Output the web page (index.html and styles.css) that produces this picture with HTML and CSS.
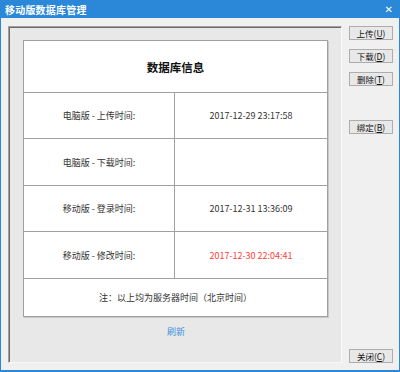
FILE: index.html
```html
<!DOCTYPE html>
<html lang="zh-CN">
<head>
    <meta charset="UTF-8">
    <title>移动版数据库管理</title>
    <link rel="stylesheet" href="styles.css">
</head>
<body>
    <div class="window">
        <div class="title-bar">
            <span class="title">移动版数据库管理</span>
            <span class="close-x">✕</span>
        </div>
        <div class="content">
            <div class="panel">
                <table class="info-table">
                    <tr class="head-row">
                        <td colspan="2">数据库信息</td>
                    </tr>
                    <tr class="row-a">
                        <td class="label">电脑版 - 上传时间:</td>
                        <td class="value">2017-12-29 23:17:58</td>
                    </tr>
                    <tr class="row-b">
                        <td class="label">电脑版 - 下载时间:</td>
                        <td class="value"></td>
                    </tr>
                    <tr class="row-a">
                        <td class="label">移动版 - 登录时间:</td>
                        <td class="value">2017-12-31 13:36:09</td>
                    </tr>
                    <tr class="row-b">
                        <td class="label">移动版 - 修改时间:</td>
                        <td class="value red">2017-12-30 22:04:41</td>
                    </tr>
                    <tr class="foot-row">
                        <td colspan="2">注：以上均为服务器时间（北京时间）</td>
                    </tr>
                </table>
                <div class="refresh">刷新</div>
            </div>
            <div class="side">
                <button class="btn">上传(<u>U</u>)</button>
                <button class="btn">下载(<u>D</u>)</button>
                <button class="btn">删除(<u>T</u>)</button>
                <button class="btn btn-bind">绑定(<u>B</u>)</button>
                <button class="btn btn-close">关闭(<u>C</u>)</button>
            </div>
        </div>
    </div>
</body>
</html>
```

FILE: styles.css
```css
body {
    margin: 0;
    font-family: "Noto Sans CJK SC", "Microsoft YaHei", sans-serif;
    background: #f0f0f0;
}
.window {
    width: 400px;
    height: 372px;
    box-sizing: border-box;
    border: 1px solid #2b88d8;
    border-top: none;
    border-bottom-width: 2px;
    background: #f0f0f0;
    display: flex;
    flex-direction: column;
}
.title-bar {
    height: 18px;
    background: #2b88d8;
    color: #fff;
    display: flex;
    align-items: center;
    justify-content: space-between;
    padding: 0 6px 0 4px;
}
.title {
    font-size: 10px;
    font-weight: bold;
    letter-spacing: 0.2px;
}
.close-x {
    font-size: 10px;
    font-weight: bold;
    font-family: "DejaVu Sans", sans-serif;
}
.content {
    flex: 1;
    display: flex;
    padding: 8px 6px 7px 7px;
}
.panel {
    width: 334px;
    box-sizing: border-box;
    background: #e8e8e8;
    border-top: 1px solid #a0a0a0;
    border-left: 1px solid #a0a0a0;
    border-right: 1px solid #f8f8f8;
    border-bottom: 1px solid #f8f8f8;
    box-shadow: inset 1px 1px 0 #696969;
    padding: 13px 12px 0 14px;
}
.info-table {
    width: 305px;
    border-collapse: collapse;
    background: #fff;
    border: 1px solid #a0a0a0;
    box-shadow: 1px 1px 0 #c8c8c8;
    color: #333;
}
.info-table td {
    border: 1px solid #a0a0a0;
    text-align: center;
    padding: 0;
    font-size: 9px;
}
.head-row td {
    height: 51px;
    font-size: 11.5px;
    font-weight: bold;
    color: #111;
}
.row-a td {
    height: 45px;
}
.row-b td {
    height: 46px;
}
.label {
    width: 150px;
}
.value {
    font-size: 9.5px;
}
.red {
    color: #ff3c3c;
}
.foot-row td {
    height: 37px;
}
.refresh {
    text-align: center;
    color: #3c8fe0;
    font-size: 9px;
    margin-top: 8px;
}
.side {
    flex: 1;
    display: flex;
    flex-direction: column;
    align-items: flex-end;
}
.btn {
    width: 44px;
    height: 14px;
    padding: 0;
    margin: 0 0 9px 0;
    background: #e8e8e8;
    border: 1px solid #adadad;
    font-family: "Noto Sans CJK SC", sans-serif;
    font-size: 8.5px;
    line-height: 12px;
    color: #111;
}
.btn-bind {
    margin-top: 25px;
}
.btn-close {
    margin-top: auto;
    margin-bottom: 0;
}
```
